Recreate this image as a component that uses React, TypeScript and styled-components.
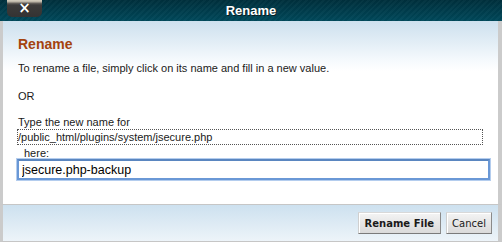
import React from "react";
import styled, { createGlobalStyle } from "styled-components";

const Global = createGlobalStyle`
  html, body { margin: 0; padding: 0; background: #fff; }
  body { font-family: "Liberation Sans", Arial, sans-serif; }
  * { box-sizing: border-box; }
`;

const Window = styled.div`
  width: 502px;
  height: 242px;
  display: flex;
  flex-direction: column;
  overflow: hidden;
`;

const TitleBar = styled.div`
  height: 21px;
  flex: none;
  display: grid;
  grid-template-columns: 1fr auto 1fr;
  align-items: center;
  background:
    repeating-linear-gradient(135deg, rgba(255,255,255,0.025) 0 2px, rgba(0,0,0,0.03) 2px 4px),
    linear-gradient(#00303d, #003f4f 60%, #00495b);
`;

const CloseButton = styled.div`
  justify-self: start;
  align-self: start;
  margin-left: 7px;
  width: 35px;
  height: 17px;
  border-radius: 0 0 5px 5px;
  background: linear-gradient(#d9d2c2 0, #b8b0a2 2px, #6b6660 3px, #3d3b3a 5px, #343333 100%);
  color: #fff;
  font: bold 15px/17px "DejaVu Sans", sans-serif;
  text-align: center;
  text-shadow: 0 0 1px #000;
`;

const Title = styled.div`
  color: #fff;
  font: bold 13px/21px "Liberation Sans", Arial, sans-serif;
  text-shadow: 1px 1px 0 #0b1a1f;
`;

const Body = styled.div`
  flex: 1;
  border-left: 3px solid #cbcbcb;
  border-right: 4px solid #cbcbcb;
  padding: 14px 8px 0 15px;
  background: linear-gradient(#cde0ee 0, #e3eef6 22px, #f6fafd 40px, #fff 50px);
  color: #1a1a1a;
`;

const Heading = styled.h2`
  margin: 0;
  font: bold 14px/18px "Liberation Sans", Arial, sans-serif;
  color: #a4430f;
`;

const Para = styled.p<{ $top: number }>`
  margin: ${(p) => p.$top}px 0 0;
  font: 11px/14px "Liberation Sans", Arial, sans-serif;
`;

const Label = styled.div`
  margin-top: 13px;
  font: 11px/12px "Liberation Sans", Arial, sans-serif;
`;

const PathBox = styled.div`
  margin: 1px 0 0 -1px;
  width: 466px;
  height: 16px;
  border: 1px dotted #555;
  padding: 1px 0 0 0;
  font: 11px/13px "Liberation Sans", Arial, sans-serif;
`;

const Here = styled.div`
  margin: 2px 0 0 6px;
  font: 11px/12px "Liberation Sans", Arial, sans-serif;
`;

const NameInput = styled.input`
  display: block;
  margin: 0 0 0 -1px;
  width: 473px;
  height: 21px;
  border: 2px solid #6a98d6;
  border-top-color: #5a86c0;
  box-shadow: 0 0 0 1px #b4cdee;
  padding: 0 0 0 3px;
  outline: none;
  font: 12.5px "Liberation Sans", Arial, sans-serif;
  color: #000;
  background: #fff;
`;

const Footer = styled.div`
  height: 38px;
  flex: none;
  display: flex;
  justify-content: flex-end;
  align-items: center;
  gap: 5px;
  padding-right: 6px;
  border: 1px solid #c6c6c6;
  border-left: 3px solid #cbcbcb;
  border-right: 4px solid #cbcbcb;
  background: linear-gradient(#cde1ef, #e0ecf5 60%, #edf4f9);
`;

const Button = styled.button<{ $primary?: boolean }>`
  height: 22px;
  padding: 0 ${(p) => (p.$primary ? 6 : 5)}px;
  border: 1px solid;
  border-color: #d8d8d8 #8a8a8a #7a7a7a #cfcfcf;
  background: linear-gradient(#f4f4f4, #e6e6e6 50%, #dadada);
  color: #1a1a1a;
  font: ${(p) => (p.$primary ? "bold" : "normal")} 10px "DejaVu Sans", Verdana, sans-serif;
  box-shadow: inset 1px 1px 0 #fff;
`;

export default function App() {
  return (
    <>
      <Global />
      <Window>
        <TitleBar>
          <CloseButton>×</CloseButton>
          <Title>Rename</Title>
          <span />
        </TitleBar>
        <Body>
          <Heading>Rename</Heading>
          <Para $top={8}>To rename a file, simply click on its name and fill in a new value.</Para>
          <Para $top={14}>OR</Para>
          <Label>Type the new name for</Label>
          <PathBox>/public_html/plugins/system/jsecure.php</PathBox>
          <Here>here:</Here>
          <NameInput defaultValue="jsecure.php-backup" />
        </Body>
        <Footer>
          <Button $primary>Rename File</Button>
          <Button>Cancel</Button>
        </Footer>
      </Window>
    </>
  );
}
